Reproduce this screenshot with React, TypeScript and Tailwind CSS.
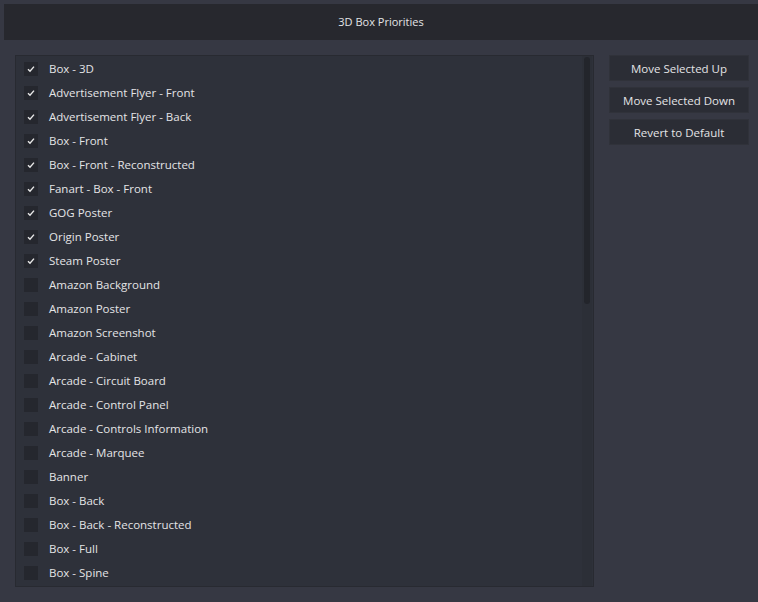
import React from "react";

const items: [string, boolean][] = [
  ["Box - 3D", true],
  ["Advertisement Flyer - Front", true],
  ["Advertisement Flyer - Back", true],
  ["Box - Front", true],
  ["Box - Front - Reconstructed", true],
  ["Fanart - Box - Front", true],
  ["GOG Poster", true],
  ["Origin Poster", true],
  ["Steam Poster", true],
  ["Amazon Background", false],
  ["Amazon Poster", false],
  ["Amazon Screenshot", false],
  ["Arcade - Cabinet", false],
  ["Arcade - Circuit Board", false],
  ["Arcade - Control Panel", false],
  ["Arcade - Controls Information", false],
  ["Arcade - Marquee", false],
  ["Banner", false],
  ["Box - Back", false],
  ["Box - Back - Reconstructed", false],
  ["Box - Full", false],
  ["Box - Spine", false],
];

function Check() {
  return (
    <svg width="10" height="10" viewBox="0 0 10 10">
      <path d="M2 5.2 L4 7.2 L8 2.6" fill="none" stroke="#e8e8e8" strokeWidth="1.4" />
    </svg>
  );
}

export default function App() {
  return (
    <div
      className="w-[758px] h-[602px] bg-[#363843] text-[#e4e4e6] overflow-hidden flex flex-col pt-[4px]"
      style={{ fontFamily: '"Open Sans", "Noto Sans", sans-serif' }}
    >
      <div className="ml-[4px] h-[36px] bg-[#27282e] flex items-center justify-center text-[11px] pt-[1px] shrink-0">
        3D Box Priorities
      </div>
      <div className="flex mt-[15px] ml-[15px] gap-[15px]">
        <div className="relative w-[579px] h-[532px] bg-[#2e313a] border border-[#282a31] overflow-hidden">
          <div className="flex flex-col pt-[1px]">
            {items.map(([label, checked]) => (
              <div key={label} className="h-[24px] flex items-center pl-[8px] shrink-0">
                <div className="w-[14px] h-[14px] bg-[#25272e] flex items-center justify-center">
                  {checked && <Check />}
                </div>
                <span className="ml-[11px] text-[11.5px] leading-none">{label}</span>
              </div>
            ))}
          </div>
          <div className="absolute right-[1px] top-0 bottom-0 w-[10px] bg-[#2c2f37]">
            <div className="mx-auto mt-[1px] w-[6px] h-[247px] rounded-[3px] bg-[#23252b]" />
          </div>
        </div>
        <div className="flex flex-col gap-[6px] w-[140px]">
          {["Move Selected Up", "Move Selected Down", "Revert to Default"].map((b) => (
            <div
              key={b}
              className="h-[26px] bg-[#2b2d35] border border-[#30323a] flex items-center justify-center text-[11.5px] pt-[2px]"
            >
              {b}
            </div>
          ))}
        </div>
      </div>
    </div>
  );
}
